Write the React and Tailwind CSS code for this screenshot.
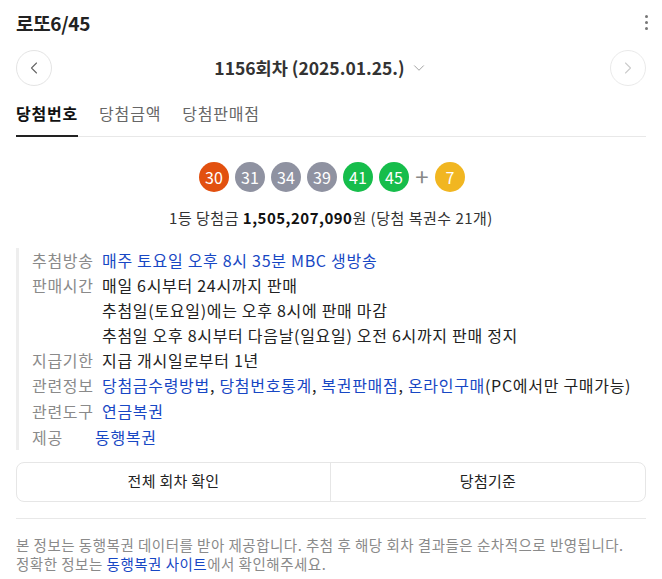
import { ChevronLeft, ChevronRight, ChevronDown } from "lucide-react";

const balls = [
  { n: 30, c: "bg-[#e2500f]" },
  { n: 31, c: "bg-[#8f92a1]" },
  { n: 34, c: "bg-[#8f92a1]" },
  { n: 39, c: "bg-[#8f92a1]" },
  { n: 41, c: "bg-[#16bd4b]" },
  { n: 45, c: "bg-[#16bd4b]" },
];

function Ball({ n, c }) {
  return (
    <span className={`w-[30px] h-[30px] rounded-full flex items-center justify-center text-white text-[16px] ${c}`}>
      {n}
    </span>
  );
}

function Row({ label, children, short, h = "h-[25px]" }) {
  return (
    <div className={`flex items-center ${h}`}>
      <span className={`text-[#8a8a8a] shrink-0 ${short ? "w-[63px]" : "w-[70px]"}`}>{label}</span>
      <span className="whitespace-nowrap">{children}</span>
    </div>
  );
}

const A = ({ children }) => <a className="text-[#1747c4]">{children}</a>;

export default function App() {
  return (
    <div className="w-[662px] h-[579px] bg-white text-[#222] px-4 text-[15px] font-['Noto_Sans_CJK_KR','Noto_Sans',sans-serif] overflow-hidden">
      {/* header */}
      <div className="flex items-center justify-between h-[44px]">
        <h1 className="text-[19px] font-bold leading-none tracking-[-0.3px]">로또6/45</h1>
        <div className="flex flex-col gap-[3px] mr-[-2px]">
          <span className="w-[3px] h-[3px] rounded-full bg-[#777]" />
          <span className="w-[3px] h-[3px] rounded-full bg-[#777]" />
          <span className="w-[3px] h-[3px] rounded-full bg-[#777]" />
        </div>
      </div>

      {/* draw nav */}
      <div className="flex items-center justify-between mt-[6px]">
        <button className="w-[36px] h-[36px] rounded-full border border-[#e4e4e4] flex items-center justify-center text-[#666]">
          <ChevronLeft size={20} strokeWidth={1.3} />
        </button>
        <div className="flex items-center gap-[5px] mr-[20px]">
          <span className="text-[17.5px] font-bold text-[#333]">1156회차 (2025.01.25.)</span>
          <ChevronDown size={18} strokeWidth={1.2} className="text-[#999]" />
        </div>
        <button className="w-[36px] h-[36px] rounded-full border border-[#eaeaea] flex items-center justify-center text-[#ccc]">
          <ChevronRight size={20} strokeWidth={1.3} />
        </button>
      </div>

      {/* tabs */}
      <div className="flex gap-[21px] border-b border-[#e8e8e8] mt-[8px] h-[43px] items-stretch text-[16px] tracking-[0.8px]">
        <span className="font-bold text-[#111] border-b-2 border-[#222] flex items-center mb-[-1px] pb-[4px]">당첨번호</span>
        <span className="text-[#666] flex items-center pb-[4px]">당첨금액</span>
        <span className="text-[#666] flex items-center pb-[4px]">당첨판매점</span>
      </div>

      {/* balls */}
      <div className="flex justify-center items-center gap-[6px] mt-[25px] ml-[2px]">
        {balls.map((b) => (
          <Ball key={b.n} {...b} />
        ))}
        <span className="text-[#888] text-[24px] leading-none w-[14px] text-center mb-[2px]">+</span>
        <Ball n={7} c="bg-[#f1b621]" />
      </div>

      <p className="text-center mt-[15px] text-[#333] tracking-[0.5px]">
        1등 당첨금 <b className="text-[#111]">1,505,207,090</b>원 (당첨 복권수 21개)
      </p>

      {/* info */}
      <div className="mt-[18px] border-l-[3px] border-[#eee] pl-[13px] leading-[25px] text-[16px] tracking-[0.7px]">
        <Row label="추첨방송"><A>매주 토요일 오후 8시 35분 MBC 생방송</A></Row>
        <div className="flex">
          <span className="text-[#8a8a8a] w-[70px] shrink-0">판매시간</span>
          <div className="flex flex-col whitespace-nowrap">
            <span>매일 6시부터 24시까지 판매</span>
            <span>추첨일(토요일)에는 오후 8시에 판매 마감</span>
            <span>추첨일 오후 8시부터 다음날(일요일) 오전 6시까지 판매 정지</span>
          </div>
        </div>
        <Row label="지급기한">지급 개시일로부터 1년</Row>
        <Row label="관련정보" h="h-[26px]">
          <A>당첨금수령방법</A>, <A>당첨번호통계</A>, <A>복권판매점</A>, <A>온라인구매</A>(PC에서만 구매가능)
        </Row>
        <Row label="관련도구" h="h-[26px]"><A>연금복권</A></Row>
        <Row label="제공" short><A>동행복권</A></Row>
      </div>

      {/* buttons */}
      <div className="mt-[12px] grid grid-cols-2 border border-[#e6e6e6] rounded-[8px] h-[40px] tracking-[0.3px]">
        <button className="border-r border-[#e6e6e6] text-[#222]">전체 회차 확인</button>
        <button className="text-[#222]">당첨기준</button>
      </div>

      <div className="border-t border-[#e8e8e8] mt-[16px]" />

      <p className="mt-[16px] text-[14.5px] leading-[19px] text-[#8a8a8a] tracking-[0.5px] whitespace-nowrap">
        본 정보는 동행복권 데이터를 받아 제공합니다. 추첨 후 해당 회차 결과들은 순차적으로 반영됩니다.
        <br />
        정확한 정보는 <span className="text-[#1747c4]">동행복권 사이트</span>에서 확인해주세요.
      </p>
    </div>
  );
}
